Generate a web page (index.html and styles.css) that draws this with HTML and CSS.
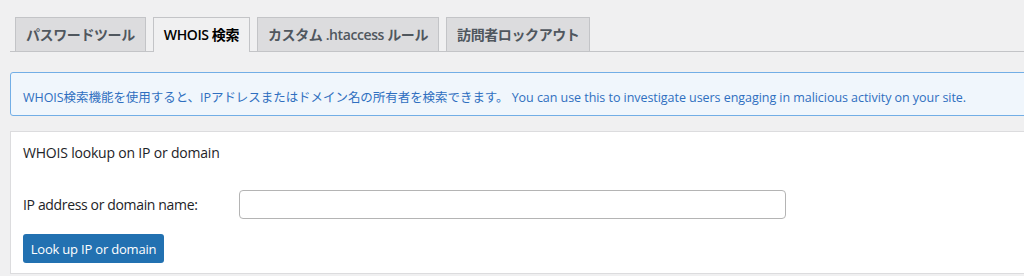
FILE: index.html
```html
<!DOCTYPE html>
<html>
<head>
  <meta charset="UTF-8">
  <meta name="viewport" content="width=device-width, initial-scale=1.0">
  <link rel="stylesheet" href="styles.css">
</head>
<body>
<div class="wrap">
  <div class="tabs">
    <a class="tab">パスワードツール</a>
    <a class="tab active">WHOIS 検索</a>
    <a class="tab">カスタム .htaccess ルール</a>
    <a class="tab">訪問者ロックアウト</a>
  </div>

  <div class="notice">
    WHOIS検索機能を使用すると、IPアドレスまたはドメイン名の所有者を検索できます。 You can use this to investigate users engaging in malicious activity on your site.
  </div>

  <div class="panel">
    <h3 class="panel-title">WHOIS lookup on IP or domain</h3>
    <div class="field-row">
      <label class="field-label" for="whois">IP address or domain name:</label>
      <input class="field-input" id="whois" type="text">
    </div>
    <button class="lookup-button">Look up IP or domain</button>
  </div>
</div>
</body>
</html>
```

FILE: styles.css
```css
body {
  margin: 0;
  background-color: #f0f0f1;
  font-family: "Open Sans", "Noto Sans CJK JP", sans-serif;
  color: #1d2327;
  overflow: hidden;
}

.wrap {
  margin-left: 10px;
  margin-right: -40px;
}

.tabs {
  display: flex;
  gap: 7px;
  padding-top: 17px;
  padding-left: 5px;
  border-bottom: 1px solid #c3c4c7;
}

.tab {
  display: block;
  height: 33px;
  line-height: 33px;
  padding: 0 10px;
  border: 1px solid #c3c4c7;
  border-bottom: none;
  background-color: #dcdcde;
  color: #50575e;
  font-size: 14px;
  font-weight: 600;
  letter-spacing: -0.4px;
  margin-bottom: -1px;
}

.tab.active {
  background-color: #f0f0f1;
  color: #000;
  height: 34px;
}

.notice {
  margin-top: 20px;
  height: 42px;
  line-height: 50px;
  padding: 0 0 0 12px;
  border: 1px solid #72aee6;
  border-radius: 3px;
  background-color: #f0f6fc;
  color: #2f6fc0;
  font-size: 12.5px;
  letter-spacing: -0.05px;
  white-space: nowrap;
}

.panel {
  margin-top: 15px;
  height: 141px;
  padding: 0 12px;
  border: 1px solid #dcdcde;
  background-color: #fff;
}

.panel-title {
  margin: 0;
  padding-top: 11px;
  height: 20px;
  line-height: 20px;
  font-size: 14px;
  font-weight: 500;
  letter-spacing: -0.2px;
}

.field-row {
  display: flex;
  align-items: center;
  margin-top: 27px;
}

.field-label {
  width: 216px;
  font-size: 14px;
  letter-spacing: -0.35px;
}

.field-input {
  width: 547px;
  height: 29px;
  box-sizing: border-box;
  border: 1px solid #b4b4b4;
  border-radius: 4px;
  background: #fff;
}

.lookup-button {
  display: block;
  margin-top: 15px;
  width: 141px;
  height: 29px;
  border: none;
  border-radius: 3px;
  background-color: #2271b1;
  color: #fff;
  font-family: inherit;
  font-size: 13px;
  letter-spacing: -0.2px;
  padding: 0;
}
```
